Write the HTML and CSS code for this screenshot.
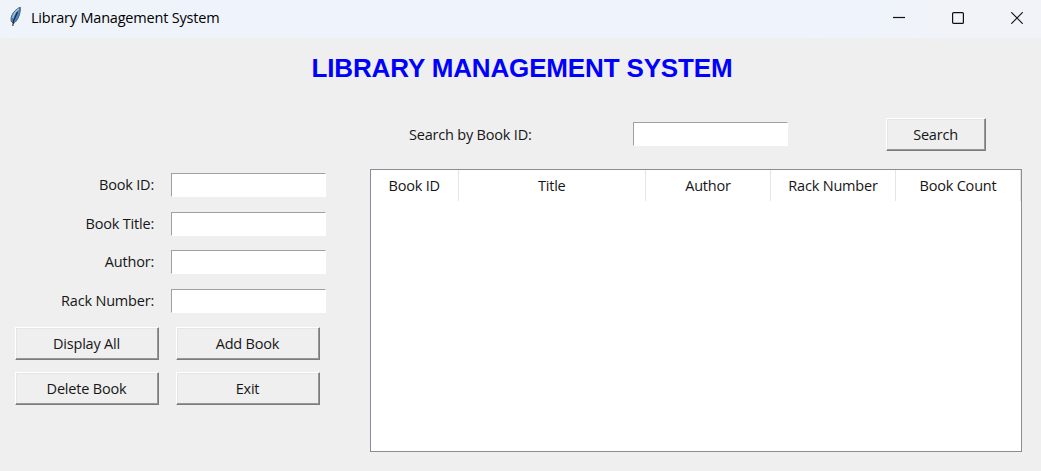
FILE: index.html
```html
<!DOCTYPE html>
<html lang="en">
<head>
<meta charset="utf-8">
<title>Library Management System</title>
<link rel="stylesheet" href="styles.css">
</head>
<body>
<header class="titlebar">
  <svg class="feather" width="16" height="22" viewBox="0 0 16 22">
    <path d="M12.300 1.300C8.500 2.500 4.200 7 3.200 11.500L3.100 15.200L5.500 17.500C9.500 15 12.600 8.500 12.300 1.300Z" fill="#4387d0" stroke="#555c64" stroke-width="1"/>
    <path d="M10.800 2.900C7.800 5 5.400 8.500 4.700 12" fill="none" stroke="#a9c2da" stroke-width="1.300"/>
    <path d="M9.500 6L5.500 15L4.800 20" fill="none" stroke="#1d242c" stroke-width="1.100"/>
  </svg>
  <span class="window-title">Library Management System</span>
  <div class="controls">
    <svg width="12" height="12" viewBox="0 0 12 12"><path d="M0 5.500H12" class="line"/></svg>
    <svg width="12" height="12" viewBox="0 0 12 12"><rect x=".6" y=".6" width="10.800" height="10.800" rx="1" class="line"/></svg>
    <svg width="12" height="12" viewBox="0 0 12 12"><path d="M.3 .3L11.700 11.700M11.700 .3L.3 11.700" class="line"/></svg>
  </div>
</header>
<main>
  <h1>LIBRARY MANAGEMENT SYSTEM</h1>
  <div class="search">
    <label for="q">Search by Book ID:</label>
    <input id="q" type="text">
    <button>Search</button>
  </div>
  <div class="content">
    <section class="side">
      <form class="fields">
        <label for="id">Book ID:</label><input id="id" type="text">
        <label for="title">Book Title:</label><input id="title" type="text">
        <label for="author">Author:</label><input id="author" type="text">
        <label for="rack">Rack Number:</label><input id="rack" type="text">
      </form>
      <div class="actions">
        <button>Display All</button><button>Add Book</button>
        <button>Delete Book</button><button>Exit</button>
      </div>
    </section>
    <section class="table">
      <div class="head">
        <span>Book ID</span><span>Title</span><span>Author</span><span>Rack Number</span><span>Book Count</span>
      </div>
    </section>
  </div>
</main>
</body>
</html>
```
FILE: styles.css
```css
* { box-sizing: border-box; }
body {
  margin: 0;
  width: 1041px;
  height: 471px;
  overflow: hidden;
  background: #efefef;
  color: #161616;
  font: 14.5px/20px "Open Sans", "Noto Sans", sans-serif;
  letter-spacing: -0.2px;
}
.titlebar {
  display: flex;
  align-items: center;
  height: 38px;
  padding: 0 18px 0 8px;
  background: linear-gradient(90deg, #eff4fb 0%, #eef3fc 80%, #f1f3f8 92%);
}
.feather { margin-top: -4px; }
.window-title { margin: -2px 0 0 7px; color: #000; }
.controls { display: flex; gap: 47px; margin: -2px 0 0 auto; }
.line { fill: none; stroke: #111; stroke-width: 1.2; }
h1 {
  margin: 0;
  padding: 15px 0 0 3px;
  height: 80px;
  text-align: center;
  font: bold 26px/30px "Liberation Sans", Arial, sans-serif;
  letter-spacing: -0.15px;
  color: #00f;
}
.search {
  display: grid;
  grid-template-columns: 224px 253px 100px;
  align-items: center;
  height: 33px;
  margin-left: 409px;
}
label, span, button { white-space: nowrap; }
input {
  width: 155px;
  height: 24px;
  margin: 0;
  padding: 0 4px;
  border: 1px solid #fff;
  border-top-color: #a0a0a0;
  border-left-color: #a0a0a0;
  outline: none;
  background: #fff;
  font: inherit;
}
.search input { margin-top: -1px; }
button {
  height: 33px;
  padding: 0 1px 0 0;
  border: 1px solid;
  border-color: #fff #7c7c7c #7c7c7c #fff;
  box-shadow: inset -1px -1px #979797, inset 1px 1px #e6e6e6;
  background: #efefef;
  color: inherit;
  font: inherit;
  letter-spacing: inherit;
}
.content { display: flex; margin-top: 18px; }
.side { width: 370px; padding-top: 4px; }
.fields {
  display: grid;
  grid-template-columns: 155px 155px;
  grid-auto-rows: 24px;
  gap: 14.7px 16px;
  align-items: center;
}
.fields label { padding-right: 1px; text-align: right; }
.actions {
  display: grid;
  grid-template-columns: 144px 144px;
  gap: 12px 17px;
  margin: 14px 0 0 15px;
}
.table {
  width: 652px;
  height: 283px;
  border: 1px solid #8b8d96;
  background: #fff;
}
.head { display: grid; grid-template-columns: 87.5px 187.5px 125px 125px 125px; }
.head span {
  height: 31px;
  padding-top: 6px;
  border-right: 1px solid #e5e5e5;
  text-align: center;
}
```
